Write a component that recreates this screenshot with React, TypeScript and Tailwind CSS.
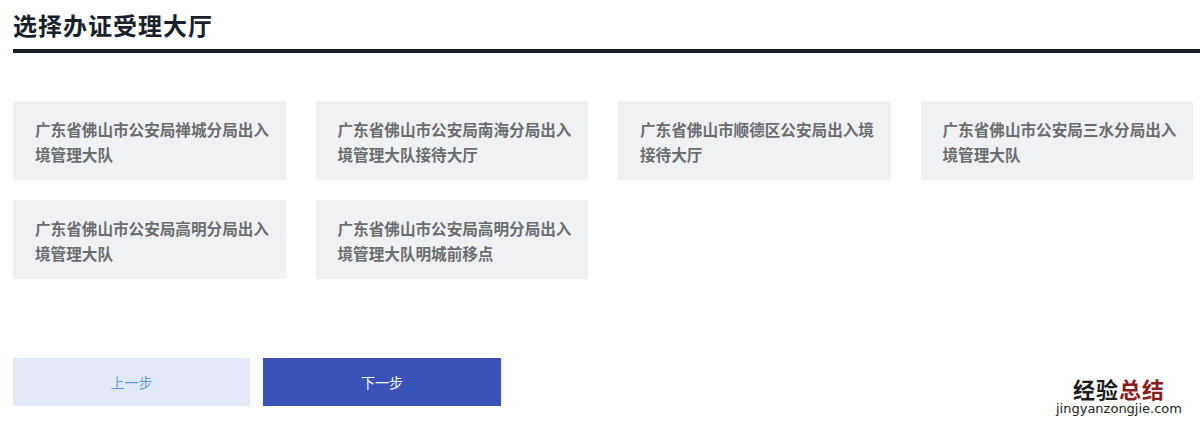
import React, { useState } from 'react';

const halls = [
  '广东省佛山市公安局禅城分局出入境管理大队',
  '广东省佛山市公安局南海分局出入境管理大队接待大厅',
  '广东省佛山市顺德区公安局出入境接待大厅',
  '广东省佛山市公安局三水分局出入境管理大队',
  '广东省佛山市公安局高明分局出入境管理大队',
  '广东省佛山市公安局高明分局出入境管理大队明城前移点',
];

const font = { fontFamily: '"Noto Sans CJK SC", "Noto Sans", sans-serif' };

export default function App() {
  const [selected, setSelected] = useState<number | null>(null);

  return (
    <div className="relative w-[1200px] h-[431px] bg-white overflow-hidden" style={font}>
      <div className="pl-[13px]">
        <h1 className="pt-[9px] h-[49px] text-[24px] leading-[32px] font-bold text-[#17212b] tracking-[1px]">
          选择办证受理大厅
        </h1>
        <div className="h-[4px] bg-[#1a2228]" />
      </div>

      <div className="pl-[13px] pr-[7px] pt-[48px]">
        <div className="grid grid-cols-4 gap-x-[30px] gap-y-[20px]">
          {halls.map((name, i) => (
            <button
              key={i}
              onClick={() => setSelected(i)}
              className={`h-[79px] pl-[22px] pr-[8px] text-left flex items-center ${
                selected === i ? 'bg-[#e1e9f8]' : 'bg-[#f0f1f3]'
              }`}
            >
              <span className="text-[15.6px] leading-[25px] font-bold text-[#6a6d70] pt-[2px]">{name}</span>
            </button>
          ))}
        </div>
      </div>

      <div className="pl-[13px] pt-[79px] flex gap-[13px]">
        <button className="w-[237px] h-[48px] bg-[#e2eafa] text-[#5c9ad6] text-[14px]">上一步</button>
        <button className="w-[238px] h-[48px] bg-[#3953b8] text-white text-[14px]">下一步</button>
      </div>

      <div className="absolute left-[1049px] top-[375px] w-[140px] flex flex-col items-center">
        <div className="text-[22px] leading-[26px] font-bold text-[#1c1c1c] tracking-[1px]">
          经验<span className="text-[#8a1d1d]">总结</span>
        </div>
        <div className="text-[13px] leading-[16px] text-[#222]" style={{ fontFamily: '"DejaVu Sans", sans-serif' }}>
          jingyanzongjie.com
        </div>
      </div>
    </div>
  );
}
